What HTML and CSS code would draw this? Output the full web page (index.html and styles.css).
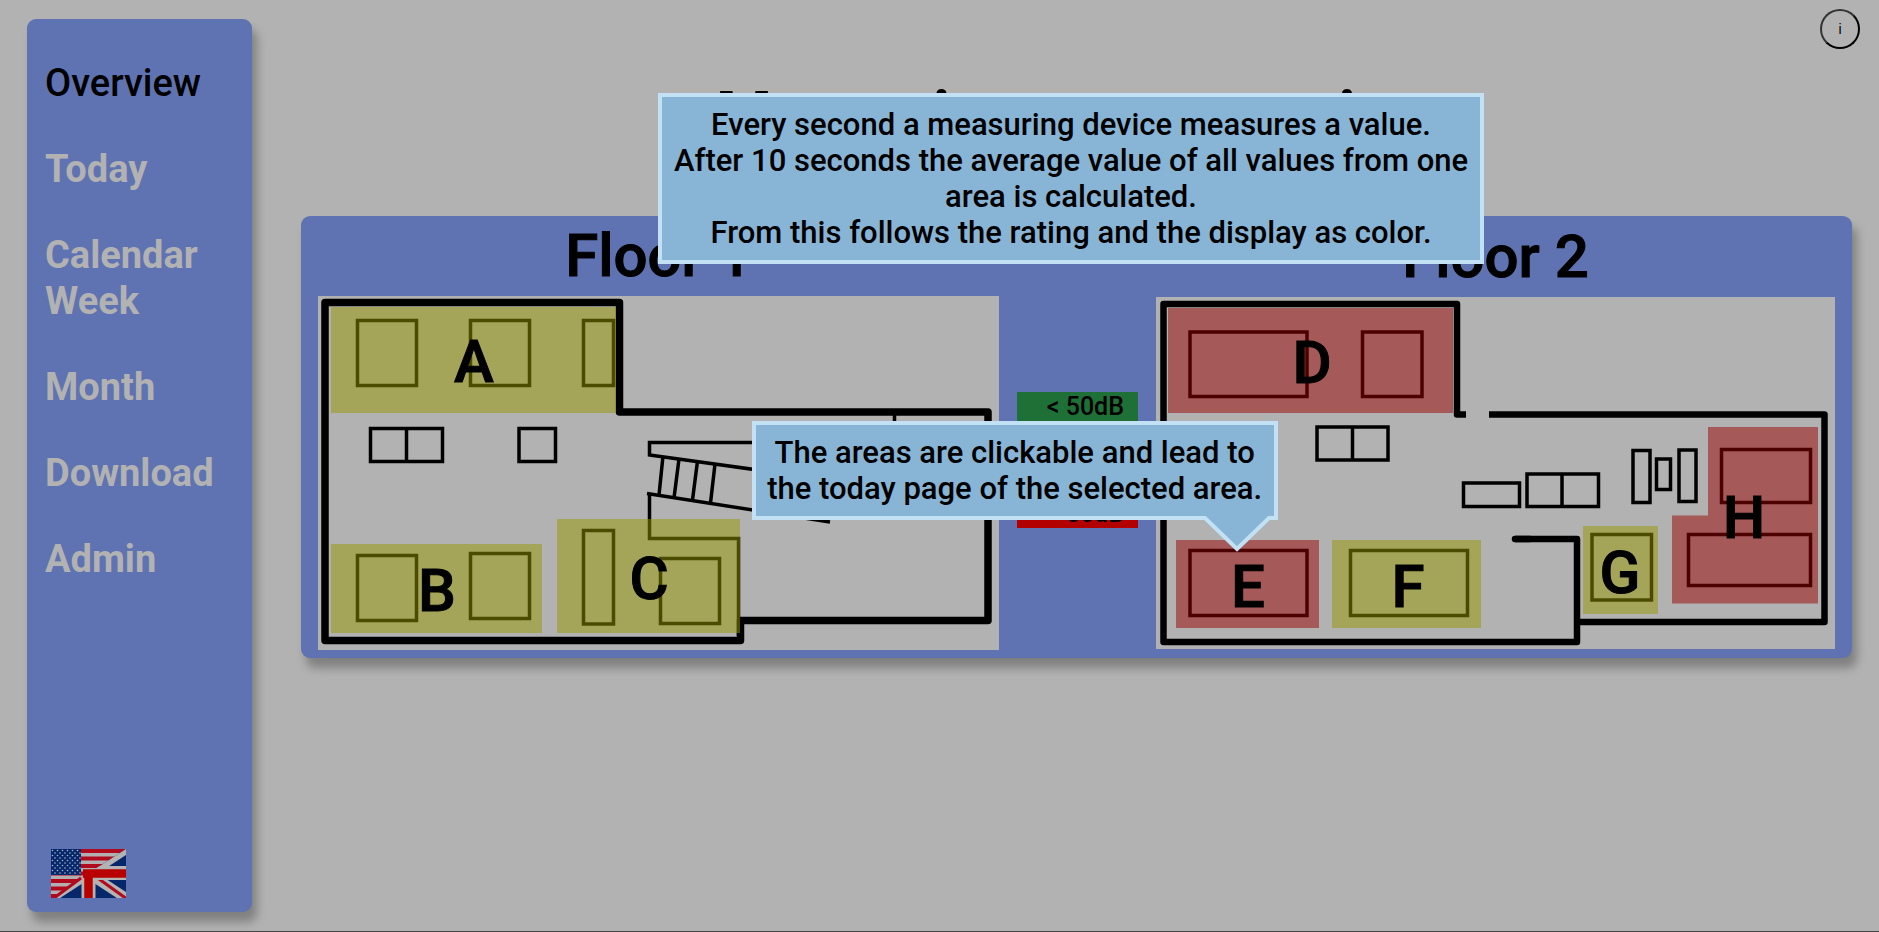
FILE: index.html
```html
<!DOCTYPE html>
<html lang="en">
<head>
<meta charset="utf-8">
<title>Overview</title>
<link rel="stylesheet" href="styles.css">
</head>
<body>
<div class="page">
  <aside class="sidebar">
    <nav class="menu">
      <a class="menu-link active" href="#overview">Overview</a>
      <a class="menu-link" href="#today">Today</a>
      <a class="menu-link" href="#week">Calendar Week</a>
      <a class="menu-link" href="#month">Month</a>
      <a class="menu-link" href="#download">Download</a>
      <a class="menu-link" href="#admin">Admin</a>
    </nav>
    <button class="language" aria-label="English">
      <svg class="flag" viewBox="0 0 75 49" aria-hidden="true">
        <defs>
          <pattern id="stars" width="5" height="5" patternUnits="userSpaceOnUse">
            <circle cx="1.5" cy="1.5" r="0.8" fill="#a9b4c4"/>
            <circle cx="4" cy="4" r="0.8" fill="#a9b4c4"/>
          </pattern>
          <clipPath id="uk"><path d="M75 0V49H5L38 24Z"/></clipPath>
        </defs>
        <rect width="75" height="49" fill="#b3aeb0"/>
        <path d="M0 2H75M0 9.500H75M0 17H75M0 24.500H75M0 32H75M0 39.500H75M0 47H75" stroke="#b00a1c" stroke-width="3.800"/>
        <rect width="30" height="26" fill="#06286b"/>
        <rect width="30" height="26" fill="url(#stars)"/>
        <g clip-path="url(#uk)">
          <rect width="75" height="49" fill="#06286b"/>
          <path d="M0 0L75 49M75 0L0 49" stroke="#b3b3b3" stroke-width="10"/>
          <path d="M48 30L80 53" stroke="#b00a1c" stroke-width="3"/>
          <path d="M37.500 24V49M30 24H75" stroke="#b3b3b3" stroke-width="14"/>
        </g>
        <path d="M37.500 22V49M32 24.500H75" stroke="#b80000" stroke-width="8.500"/>
        <path d="M3 49L30 29" stroke="#b00a1c" stroke-width="3"/>
      </svg>
    </button>
  </aside>

  <main class="content">
    <h1 class="title">Measuring area overview</h1>
    <section class="card">
      <div class="floor floor-one">
        <h2 class="floor-name">Floor 1</h2>
        <svg class="plan" viewBox="318 296 681 354" role="img" aria-label="Floor 1 plan">
          <path class="wall" d="M325 302.500H619.500V412H988V620.500H740.500V640.500H325Z"/>
          <g class="desk">
            <path d="M357.500 320.500h59v65h-59zM470.500 320.500h59v65h-59zM583.500 320.500h30v65h-30z"/>
            <path d="M370.500 428.500h72v33h-72zM406.500 428.500v33M519 428.500h36.500v33h-36.500z"/>
            <path d="M357.500 555.500h59v65h-59zM470.500 553.500h59v65h-59z"/>
            <path d="M583.500 530.500h30v93.500h-30zM660.500 558.500h59v65h-59z"/>
            <path d="M894.500 412V440"/>
            <path d="M830 442.500H649.500V455L830 480M647 493.500L830 522M649.500 493.500V538.500H738.500V636"/>
            <path d="M663 456L659 495M679 459L674 498M697.500 461L692.500 500M715 464L710.500 503"/>
          </g>
          <a href="#a"><path class="area medium" d="M331 307h285v106H331z"/><text class="mark" x="474" y="382">A</text></a>
          <a href="#b"><path class="area medium" d="M331 544h211v89H331z"/><text class="mark" x="437" y="611">B</text></a>
          <a href="#c"><path class="area medium" d="M557 519h183v114H557z"/><text class="mark" x="649" y="599">C</text></a>
        </svg>
      </div>

      <ul class="legend">
        <li class="low">&lt; 50dB</li>
        <li class="mid">50dB -<br>60dB</li>
        <li class="high">&gt; 60dB</li>
      </ul>

      <div class="floor floor-two">
        <h2 class="floor-name">Floor 2</h2>
        <svg class="plan" viewBox="1156 297 679 352" role="img" aria-label="Floor 2 plan">
          <path class="wall thin" d="M1466 414.500H1457V304H1163.500V642H1577V539H1515M1489 414.500H1824.500V622H1577"/>
          <path class="wall thin round" d="M1515 539H1530"/>
          <g class="desk">
            <path d="M1190 332h117v64.500h-117zM1362.500 332h59.500v64.500h-59.500z"/>
            <path d="M1317 427h71v33h-71zM1352.500 427v33"/>
            <path d="M1190 550.500h117v65h-117zM1350.500 550.500h117v65h-117z"/>
            <path d="M1463.500 483h56v23.500h-56zM1527 474h71.500v32.500h-71.500zM1562 474v32.500"/>
            <path d="M1633 450.500h17v52h-17zM1656.500 459h14v30.500h-14zM1679 450h17v51.500h-17z"/>
            <path d="M1592 534.500h59.500v65.500h-59.500z"/>
            <path d="M1721.500 449.500h89v53h-89zM1688.500 534.500h122v51h-122z"/>
          </g>
          <a href="#d"><path class="area loud" d="M1168 308h285v105h-285z"/><text class="mark" x="1312" y="383">D</text></a>
          <a href="#e"><path class="area loud" d="M1176 540h143v88h-143z"/><text class="mark" x="1248" y="607">E</text></a>
          <a href="#f"><path class="area medium" d="M1332 540h149v88h-149z"/><text class="mark" x="1408" y="607">F</text></a>
          <a href="#g"><path class="area medium" d="M1583 526h75v88h-75z"/><text class="mark" x="1620" y="593">G</text></a>
          <a href="#h"><path class="area loud" d="M1708 427h110v176.500h-146V515.500h36z"/><text class="mark" x="1744" y="538">H</text></a>
        </svg>
      </div>
    </section>
  </main>

  <button class="info" aria-label="Information">i</button>

  <div class="hint hint-rating" role="tooltip">Every second a measuring device measures a value.<br>After 10 seconds the average value of all values from one area is calculated.<br>From this follows the rating and the display as color.</div>
  <div class="hint hint-areas" role="tooltip">The areas are clickable and lead to the today page of the selected area.
    <svg class="tail" viewBox="0 0 68 36" aria-hidden="true"><path class="tail-fill" d="M0 0H68L34 34Z"/><path class="tail-edge" d="M0 2H2L34 33L66 2H68"/></svg>
  </div>
</div>
</body>
</html>
```
FILE: styles.css
```css
* {
  box-sizing: border-box;
}

body {
  margin: 0;
  background: #b2b2b2;
  color: #000;
  font-family: Roboto, "Liberation Sans", Arial, sans-serif;
  font-weight: 500;
}

.page {
  position: relative;
  display: flex;
  gap: 49px;
  min-height: 100vh;
  padding: 19px 27px;
  border-bottom: 1px solid #444;
}

.sidebar {
  display: flex;
  flex-direction: column;
  justify-content: space-between;
  flex: 0 0 225px;
  padding: 41px 18px 14px;
  border-radius: 9px;
  background: #5f73b2;
  box-shadow: 5px 10px 10px #808080;
}

.menu {
  display: flex;
  flex-direction: column;
  gap: 40px;
}

.menu-link {
  color: #b2b2b2;
  font-size: 38px;
  font-weight: 700;
  line-height: 46px;
  text-decoration: none;
}

.menu-link.active {
  color: #000;
  font-weight: 500;
}

.language {
  align-self: flex-start;
  margin-left: 6px;
  padding: 0;
  border: 0;
  background: none;
}

.flag {
  display: block;
  width: 75px;
  height: 49px;
}

.content {
  flex: 1;
  min-width: 0;
}

.title {
  margin: 57px 0 60px;
  font-size: 64px;
  line-height: 80px;
  text-align: center;
}

.card {
  display: flex;
  gap: 18px;
  padding: 0 17px 8px;
  border-radius: 9px;
  background: #5f73b2;
  box-shadow: 5px 10px 10px #808080;
}

.floor {
  align-self: center;
  min-width: 0;
}

.floor-one {
  flex: 681;
}

.floor-two {
  flex: 679;
}

.floor-name {
  margin: 0;
  font-size: 60px;
  font-weight: 500;
  line-height: 80px;
  text-align: center;
  -webkit-text-stroke: 1px #000;
}

.plan {
  display: block;
  width: 100%;
  background: #b2b2b2;
}

.wall {
  fill: none;
  stroke: #000;
  stroke-width: 7.5px;
  stroke-linejoin: round;
}

.wall.thin {
  stroke-width: 6.5px;
}

.wall.round {
  stroke-linecap: round;
}

.desk {
  fill: none;
  stroke: #000;
  stroke-width: 3.5px;
}

.area {
  fill-opacity: 0.5;
}

.area.medium {
  fill: #989800;
}

.area.loud {
  fill: #980000;
}

.mark {
  font-size: 60px;
  font-weight: 500;
  text-anchor: middle;
  stroke: #000;
  stroke-width: 1px;
}

.legend {
  align-self: flex-start;
  flex: 0 0 121px;
  margin: 176px 0 0;
  padding: 0;
  list-style: none;
  font-size: 25px;
  line-height: 29px;
  text-align: right;
}

.legend li {
  padding-right: 14px;
}

.legend .low {
  background: #1e7036;
}

.legend .mid {
  padding-top: 10px;
  padding-bottom: 10px;
  background: #b2b200;
}

.legend .high {
  background: #b20000;
}

.info {
  position: absolute;
  top: 9px;
  right: 19px;
  width: 40px;
  height: 40px;
  padding: 0;
  border: 2px solid;
  border-color: #333 #000 #000 #333;
  border-radius: 50%;
  background: none;
  color: #000;
  font: 14px/36px "Liberation Sans", Arial, sans-serif;
}

.hint {
  position: absolute;
  padding: 10px 10px 9px;
  border: 4px solid #c2e1f5;
  background: #88b5d6;
  font-size: 31px;
  line-height: 36px;
  text-align: center;
}

.hint-rating {
  top: 93px;
  left: 35%;
  width: 44%;
}

.hint-areas {
  top: 421px;
  left: 40%;
  width: 28%;
}

.tail {
  position: absolute;
  top: 100%;
  right: 3px;
  width: 68px;
  height: 36px;
}

.tail-fill {
  fill: #88b5d6;
}

.tail-edge {
  fill: none;
  stroke: #c2e1f5;
  stroke-width: 4px;
}
```
